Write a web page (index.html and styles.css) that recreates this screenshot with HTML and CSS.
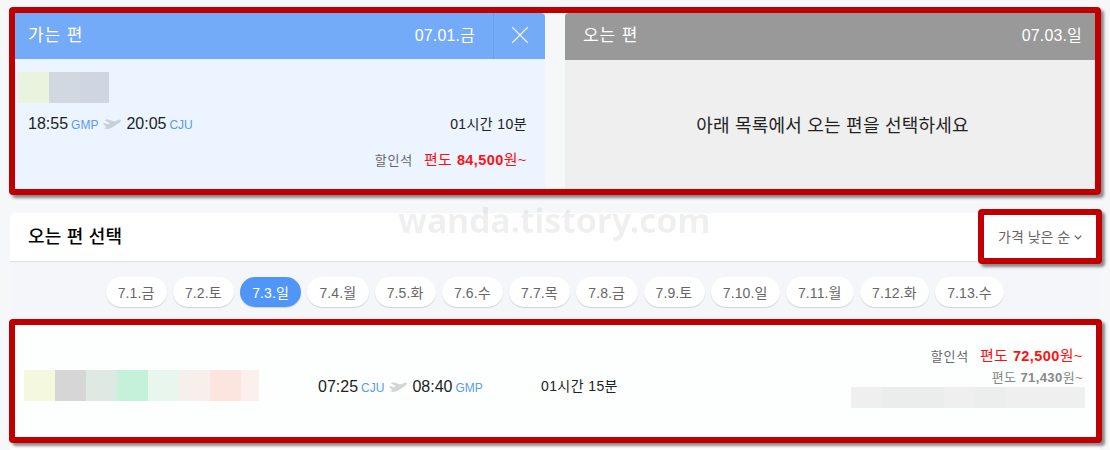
FILE: index.html
```html
<!DOCTYPE html>
<html lang="ko">
<head>
  <meta charset="UTF-8" />
  <meta name="viewport" content="width=device-width, initial-scale=1.0"/>
  <title>오는 편 선택</title>
  <link rel="stylesheet" href="styles.css">
</head>
<body>

<!-- Selected trips -->
<section class="trips marked">
  <div class="trip">
    <div class="trip-head">
      <span class="trip-name">가는 편</span>
      <span class="trip-date">07.01.금</span>
      <button class="close" aria-label="닫기">
        <svg width="16" height="16" viewBox="0 0 16 16"><path d="M0.3 0.3L15.7 15.7M15.7 0.3L0.3 15.7"/></svg>
      </button>
    </div>
    <div class="trip-body">
      <div class="airline"><i></i><i></i><i></i></div>
      <div class="trip-row">
        <div class="route">
          <span class="time">18:55</span><span class="code">GMP</span>
          <svg class="plane" width="18" height="10" viewBox="0 0 18 10"><path d="M0 4.6L1.6 4L4.4 5.2L7 4.2L1.8 1.2L4.2 0.2L11.2 2.4L15.2 0.9Q17.5 0.2 18 1.2Q18 2.6 15.6 4.2L10 8Q7 9.8 3.6 10L1.2 9.3L3.6 8L1.6 6.6Z"/></svg>
          <span class="time">20:05</span><span class="code">CJU</span>
        </div>
        <span class="duration">01시간 10분</span>
      </div>
      <div class="fare"><span class="seat">할인석</span><span class="price">편도 <b>84,500</b>원~</span></div>
    </div>
  </div>
  <div class="trip empty">
    <div class="trip-head">
      <span class="trip-name">오는 편</span>
      <span class="trip-date">07.03.일</span>
    </div>
    <p class="guide">아래 목록에서 오는 편을 선택하세요</p>
  </div>
</section>

<!-- Return flight list -->
<main class="list">
  <div class="list-head">
    <h2>오는 편 선택</h2>
    <div class="watermark">wanda.tistory.com</div>
    <div class="sort marked">
      가격 낮은 순
      <svg width="8" height="5" viewBox="0 0 8 5"><path d="M0.7 0.6L4 3.8L7.3 0.6"/></svg>
    </div>
  </div>

  <nav class="dates">
    <a>7.1.금</a>
    <a>7.2.토</a>
    <a class="on">7.3.일</a>
    <a>7.4.월</a>
    <a>7.5.화</a>
    <a>7.6.수</a>
    <a>7.7.목</a>
    <a>7.8.금</a>
    <a>7.9.토</a>
    <a>7.10.일</a>
    <a>7.11.월</a>
    <a>7.12.화</a>
    <a>7.13.수</a>
  </nav>

  <div class="flight marked">
    <div class="airline"><i></i><i></i><i></i><i></i><i></i><i></i><i></i><i></i></div>
    <div class="route">
      <span class="time">07:25</span><span class="code">CJU</span>
      <svg class="plane" width="18" height="10" viewBox="0 0 18 10"><path d="M0 4.6L1.6 4L4.4 5.2L7 4.2L1.8 1.2L4.2 0.2L11.2 2.4L15.2 0.9Q17.5 0.2 18 1.2Q18 2.6 15.6 4.2L10 8Q7 9.8 3.6 10L1.2 9.3L3.6 8L1.6 6.6Z"/></svg>
      <span class="time">08:40</span><span class="code">GMP</span>
    </div>
    <span class="duration">01시간 15분</span>
    <div class="fares">
      <div class="fare"><span class="seat">할인석</span><span class="price">편도 <b>72,500</b>원~</span></div>
      <div class="card-price">편도 <b>71,430</b>원~</div>
      <div class="card-name"><i></i><i></i><i></i><i></i><i></i></div>
    </div>
  </div>
</main>

</body>
</html>
```
FILE: styles.css
```css
* {
  box-sizing: border-box;
}

body {
  margin: 0;
  height: 450px;
  overflow: hidden;
  padding: 7px 8px 0 9px;
  background: #f5f7f9;
  color: #222;
  font-family: 'Liberation Sans', 'Noto Sans CJK KR', sans-serif;
  font-size: 14px;
  line-height: 20px;
}

/* red highlight frame */
.marked {
  border: 6px solid #c00000;
  border-radius: 4px;
  box-shadow: 3px 3px 3px rgba(0, 0, 0, 0.45);
}

.trips {
  display: flex;
  gap: 20px;
  width: 1092px;
  height: 188px;
}

.trip {
  flex: 1;
  background: #ebf4ff;
}

.trip.empty {
  background: #efefef;
}

.trip-head {
  display: flex;
  align-items: center;
  height: 46px;
  padding-left: 13px;
  background: #74abf8;
  border-top-right-radius: 4px;
  color: #fff;
}

.empty .trip-head {
  height: 47px;
  padding: 0 13px 2px 18px;
  background: #999;
  border-radius: 4px 0 0 0;
}

.trip-name {
  flex: 1;
  font-size: 17px;
  letter-spacing: 0.9px;
}

.trip-date {
  font-size: 16px;
  letter-spacing: 0.15px;
}

.close {
  display: flex;
  align-items: center;
  justify-content: center;
  width: 52px;
  height: 46px;
  margin-left: 18px;
  padding: 0 0 2px;
  border: 0;
  border-left: 1px solid #689fec;
  background: none;
}

.close svg {
  fill: none;
  stroke: #fff;
  stroke-width: 1.2;
}

.trip-body {
  padding: 13px 18px 0 13px;
}

.airline {
  display: flex;
}

.airline i {
  width: 31px;
  height: 31px;
}

.trip .airline {
  margin-left: -10px;
}

.trip .airline i:nth-child(1) { background: #e9f3de; }
.trip .airline i:nth-child(2) { background: #d1d8e0; }
.trip .airline i:nth-child(3) { width: 29px; background: #d0d6e1; }

.trip-row {
  display: flex;
  justify-content: space-between;
  margin-top: 11px;
}

.route {
  display: flex;
  align-items: baseline;
}

.time {
  font-size: 16px;
}

.code {
  margin-left: 3px;
  color: #5c98f7;
  font-size: 12px;
}

.plane {
  margin: 0 5px;
  fill: #c8d1da;
}

.duration {
  letter-spacing: 0.4px;
}

.fare {
  display: flex;
  justify-content: flex-end;
  align-items: baseline;
}

.trip .fare {
  margin-top: 15px;
}

.seat {
  margin-right: 11px;
  color: #666;
  font-size: 13px;
  letter-spacing: 0.8px;
}

.price {
  color: #ff1010;
  font-size: 15px;
  letter-spacing: 0.4px;
}

.price b {
  font-size: 14.5px;
}

.guide {
  margin: 56px 0 0 5px;
  text-align: center;
  font-size: 18px;
  letter-spacing: 0.22px;
}

/* list */
.list {
  width: 1090px;
  height: 250px;
  margin: 18px 0 0 1px;
  background: #fff;
  border-radius: 5px 5px 0 0;
}

.list-head {
  position: relative;
  height: 49px;
  padding: 14px 18px;
  border-bottom: 1px solid #dfe2e5;
}

.list-head h2 {
  margin: 0;
  color: #000;
  font-size: 18px;
  font-weight: 500;
  line-height: 20px;
  letter-spacing: 0.2px;
}

.watermark {
  position: absolute;
  left: 388px;
  top: -15px;
  color: rgba(0, 0, 0, 0.065);
  font-family: 'Noto Sans', sans-serif;
  font-size: 34px;
  font-weight: bold;
  line-height: 44px;
  letter-spacing: -0.2px;
}

.sort {
  position: absolute;
  top: -4px;
  right: -2px;
  display: flex;
  align-items: center;
  width: 124px;
  height: 55px;
  padding-left: 14px;
  background: #fff;
  color: #666;
}

.sort svg {
  margin: 2px 0 0 4px;
  fill: none;
  stroke: #666;
  stroke-width: 1.2;
}

.dates {
  display: flex;
  justify-content: center;
  gap: 6px;
  height: 57px;
  padding-top: 15px;
  background: #f5f6fa;
}

.dates a {
  height: 30px;
  padding: 0 12.5px 0 12px;
  border-radius: 15px;
  background: #fff;
  box-shadow: 0 1px 1px rgba(0, 0, 0, 0.15);
  color: #666;
  line-height: 32px;
  letter-spacing: 0.1px;
}

.dates .on {
  background: #5096f8;
  color: #fff;
}

.flight {
  display: flex;
  align-items: flex-start;
  width: 1093px;
  height: 124px;
  margin-left: -1px;
  padding-left: 9px;
  background: #fdfffe;
}

.flight .airline {
  width: 235px;
  margin-top: 45px;
}

.flight .airline i:nth-child(1) { background: #f4f8de; }
.flight .airline i:nth-child(2) { background: #d6d6d6; }
.flight .airline i:nth-child(3) { background: #dfe9e3; }
.flight .airline i:nth-child(4) { background: #c5f0da; }
.flight .airline i:nth-child(5) { background: #e9f6ed; }
.flight .airline i:nth-child(6) { background: #f7efeb; }
.flight .airline i:nth-child(7) { background: #fce4df; }
.flight .airline i:nth-child(8) { width: 18px; background: #fcf0ee; }

.flight .route {
  width: 223px;
  margin: 52px 0 0 59px;
}

.flight .plane {
  fill: #d3d6d7;
}

.flight .duration {
  margin-top: 51px;
}

.fares {
  flex: 1;
  padding: 21px 11px 0 0;
}

.flight .fare,
.card-price {
  padding-right: 2px;
}

.card-price {
  margin-top: 1px;
  color: #888;
  font-size: 13px;
  line-height: 19px;
  letter-spacing: 0.4px;
  text-align: right;
}

.card-name {
  display: flex;
  justify-content: flex-end;
}

.card-name i {
  width: 31px;
  height: 21px;
  background: #efefef;
}

.card-name i:nth-child(2) { width: 62px; background: #ebedec; }
.card-name i:nth-child(4) { background: #ebeeec; }
.card-name i:nth-child(5) { width: 79px; }
```
